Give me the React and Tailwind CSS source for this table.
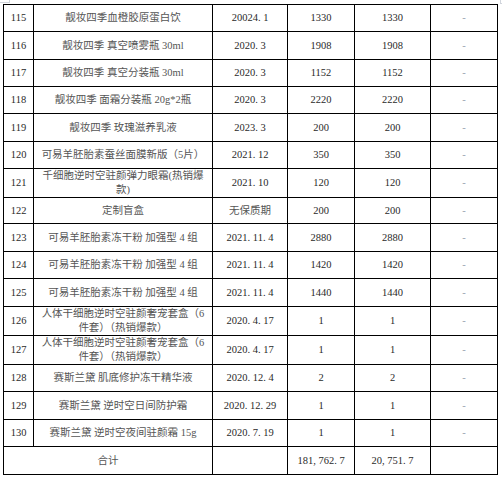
const ROWS = [
  { no: '115', name: ['靓妆四季血橙胶原蛋白饮'], date: '20024. 1', a: '1330', b: '1330', h: 'h-[27px]' },
  { no: '116', name: ['靓妆四季 真空喷雾瓶 30ml'], date: '2020. 3', a: '1908', b: '1908', h: 'h-[28px]' },
  { no: '117', name: ['靓妆四季 真空分装瓶 30ml'], date: '2020. 3', a: '1152', b: '1152', h: 'h-[27px]' },
  { no: '118', name: ['靓妆四季 面霜分装瓶 20g*2瓶'], date: '2020. 3', a: '2220', b: '2220', h: 'h-[27px]' },
  { no: '119', name: ['靓妆四季 玫瑰滋养乳液'], date: '2023. 3', a: '200', b: '200', h: 'h-[28px]' },
  { no: '120', name: ['可易羊胚胎素蚕丝面膜新版（5片）'], date: '2021. 12', a: '350', b: '350', h: 'h-[27px]' },
  { no: '121', name: ['千细胞逆时空驻颜弹力眼霜(热销爆', '款)'], date: '2021. 10', a: '120', b: '120', h: 'h-[29px]' },
  { no: '122', name: ['定制盲盒'], date: '无保质期', a: '200', b: '200', h: 'h-[26px]', cjkDate: true },
  { no: '123', name: ['可易羊胚胎素冻干粉 加强型 4 组'], date: '2021. 11. 4', a: '2880', b: '2880', h: 'h-[28px]' },
  { no: '124', name: ['可易羊胚胎素冻干粉 加强型 4 组'], date: '2021. 11. 4', a: '1420', b: '1420', h: 'h-[27px]' },
  { no: '125', name: ['可易羊胚胎素冻干粉 加强型 4 组'], date: '2021. 11. 4', a: '1440', b: '1440', h: 'h-[28px]' },
  { no: '126', name: ['人体干细胞逆时空驻颜奢宠套盒（6', '件套）（热销爆款）'], date: '2020. 4. 17', a: '1', b: '1', h: 'h-[29px]' },
  { no: '127', name: ['人体干细胞逆时空驻颜奢宠套盒（6', '件套）（热销爆款）'], date: '2020. 4. 17', a: '1', b: '1', h: 'h-[29px]' },
  { no: '128', name: ['赛斯兰黛 肌底修护冻干精华液'], date: '2020. 12. 4', a: '2', b: '2', h: 'h-[27px]' },
  { no: '129', name: ['赛斯兰黛 逆时空日间防护霜'], date: '2020. 12. 29', a: '1', b: '1', h: 'h-[28px]' },
  { no: '130', name: ['赛斯兰黛 逆时空夜间驻颜霜 15g'], date: '2020. 7. 19', a: '1', b: '1', h: 'h-[27px]' },
];

const cell = 'border border-black text-center align-middle p-0';

export default function App() {
  return (
    <div
      className="relative w-[502px] h-[478px] bg-white pl-[3px] pt-[4px] text-[10.5px] text-[#2a2a2a]"
      style={{ fontFamily: '"Liberation Serif", "Noto Sans CJK SC", serif' }}
    >
      {/* page corner marks */}
      <span className="absolute left-0 top-0 w-[10px] h-[3px] border-r border-b border-gray-300" />
      <span className="absolute left-[500px] top-0 w-[2px] h-[4px] border-l border-b border-gray-300" />

      <table className="table-fixed border-collapse w-[494px]">
        <colgroup>
          <col className="w-[30px]" />
          <col className="w-[179px]" />
          <col className="w-[75px]" />
          <col className="w-[67px]" />
          <col className="w-[76px]" />
          <col className="w-[67px]" />
        </colgroup>
        <tbody>
          {ROWS.map((r) => (
            <tr key={r.no} className={r.h}>
              <td className={cell}>{r.no}</td>
              <td className={`${cell} leading-[14px] text-[#555]`}>
                {r.name.map((line, i) => (
                  <div key={i}>{line}</div>
                ))}
              </td>
              <td className={`${cell} ${r.cjkDate ? 'text-[#555]' : ''}`}>{r.date}</td>
              <td className={cell}>{r.a}</td>
              <td className={cell}>{r.b}</td>
              <td className={`${cell} text-gray-400`}>-</td>
            </tr>
          ))}
          <tr className="h-[28px]">
            <td colSpan={2} className={`${cell} text-[#555]`}>合计</td>
            <td className={cell} />
            <td className={cell}>181, 762. 7</td>
            <td className={cell}>20, 751. 7</td>
            <td className={cell} />
          </tr>
        </tbody>
      </table>
    </div>
  );
}
